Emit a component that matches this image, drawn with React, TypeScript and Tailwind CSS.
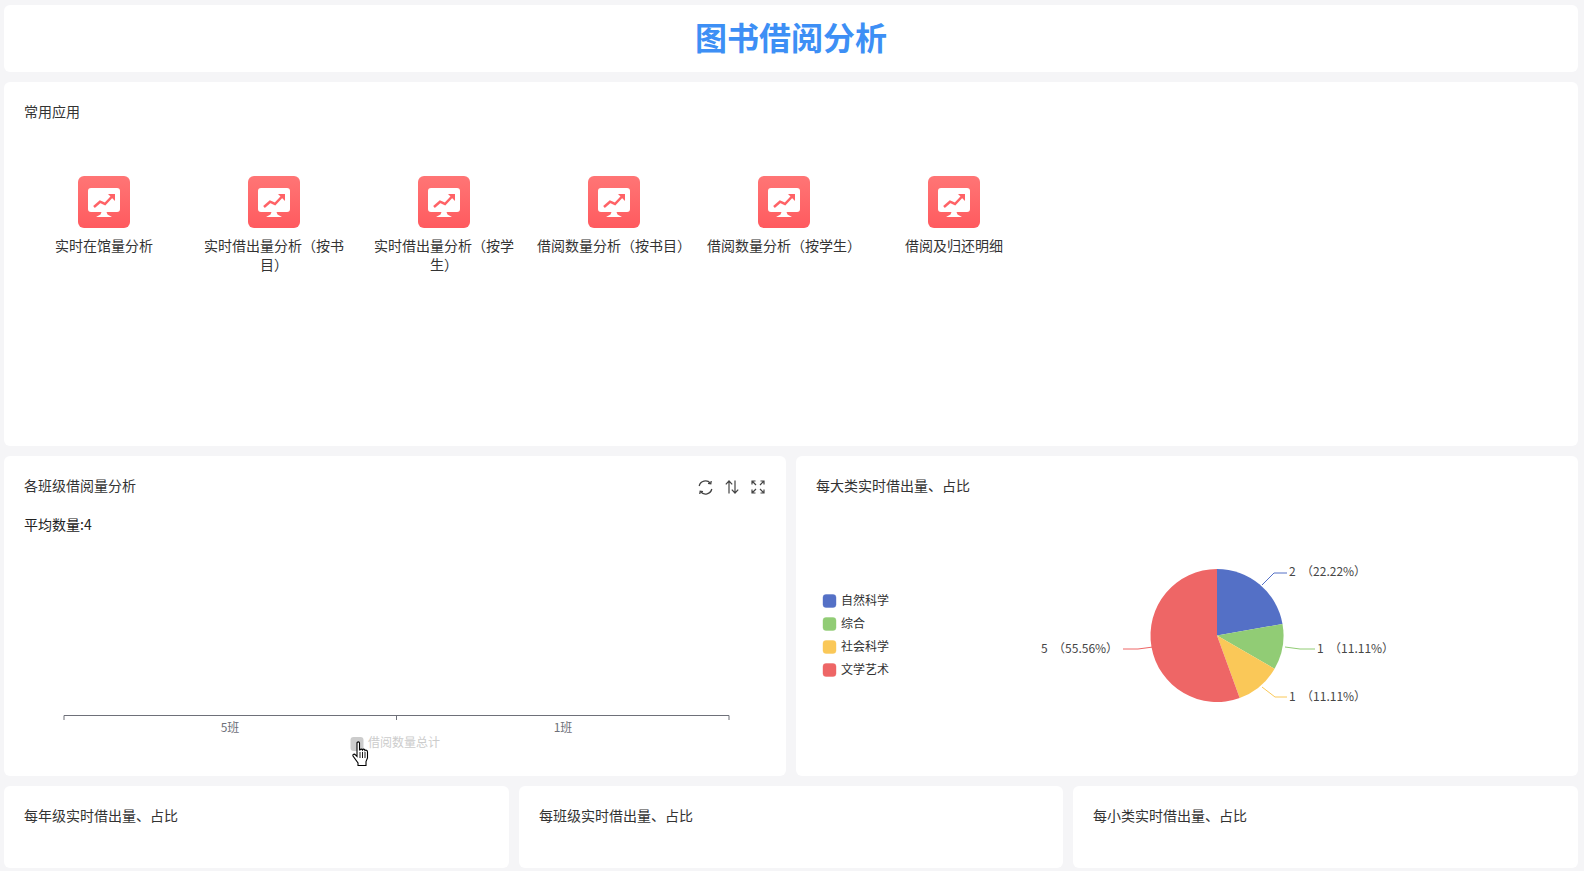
import { Fragment } from "react";

const apps = [
    "实时在馆量分析",
    "实时借出量分析（按书目）",
    "实时借出量分析（按学生）",
    "借阅数量分析（按书目）",
    "借阅数量分析（按学生）",
    "借阅及归还明细",
];

const slices = [
    { name: "自然科学", color: "#5470c6", d: "M1217 635.5 L1217 569 A66.5 66.5 0 0 1 1282.5 624 Z" },
    { name: "综合", color: "#91cc75", d: "M1217 635.5 L1282.5 624 A66.5 66.5 0 0 1 1274.6 668.8 Z" },
    { name: "社会科学", color: "#fac858", d: "M1217 635.5 L1274.6 668.8 A66.5 66.5 0 0 1 1239.7 698 Z" },
    { name: "文学艺术", color: "#ee6666", d: "M1217 635.5 L1239.7 698 A66.5 66.5 0 1 1 1217 569 Z" },
];

const pieLabels = [
    { text: "2", pct: "（22.22%）", x: 1289, y: 572, color: "#5470c6", line: "M1262 585 L1274 573 L1287 573" },
    { text: "1", pct: "（11.11%）", x: 1317, y: 649, color: "#91cc75", line: "M1285 647 L1300 649 L1315 649" },
    { text: "1", pct: "（11.11%）", x: 1289, y: 697, color: "#fac858", line: "M1262 687 L1275 697 L1287 697" },
    { text: "5", pct: "（55.56%）", x: 1041, y: 649, color: "#ee6666", line: "M1153 647 L1138 649 L1123 649" },
];

function AppIcon() {
    return (
        <div className="flex h-[52px] w-[52px] items-center justify-center rounded-md bg-gradient-to-b from-[#ff7575] to-[#ff5a5f]">
            <svg width="32" height="29" viewBox="0 0 32 29">
                <rect x="0" y="0" width="32" height="24" rx="3" fill="#fff" />
                <path d="M13.5 24 L18.5 24 L19.5 26.5 L24 29 L8 29 L12.5 26.5 Z" fill="#fff" />
                <path d="M6 19 L12 13.7 L17 16 L24.5 8" fill="none" stroke="#ff6266" strokeWidth="2.5" />
                <path d="M20 6 L27 6 L27 13 Z" fill="#ff6266" />
            </svg>
        </div>
    );
}

function ChartTools() {
    return (
        <div className="mr-px flex items-center gap-3 pt-1 text-[#444]">
            <svg width="15" height="15" viewBox="0 0 15 15" fill="none" stroke="currentColor" strokeWidth="1.3">
                <path d="M1.2 6 A6.5 6.5 0 0 1 12.4 3.2" />
                <path d="M13.8 9 A6.5 6.5 0 0 1 2.6 11.8" />
                <path d="M13.2 1 L12.8 3.8 L10 3.4" />
                <path d="M1.8 14 L2.2 11.2 L5 11.6" />
            </svg>
            <svg width="14" height="14" viewBox="0 0 14 14" fill="none" stroke="currentColor" strokeWidth="1.2">
                <path d="M4 13.5 L4 1 M0.8 4.4 L4 1 L7.2 4.4" />
                <path d="M10 0.5 L10 13 M6.8 9.6 L10 13 L13.2 9.6" />
            </svg>
            <svg width="14" height="14" viewBox="0 0 14 14" fill="none" stroke="currentColor" strokeWidth="1.2">
                <path d="M5 5 L1 1 M1 4.5 L1 1 L4.5 1" />
                <path d="M9 5 L13 1 M9.5 1 L13 1 L13 4.5" />
                <path d="M5 9 L1 13 M1 9.5 L1 13 L4.5 13" />
                <path d="M9 9 L13 13 M13 9.5 L13 13 L9.5 13" />
            </svg>
        </div>
    );
}

function BarChart() {
    // viewBox is in page coordinates, it is simpler to read against the design
    return (
        <svg className="mt-1 block" width="742" height="238" viewBox="24 538 742 238" fontSize="12">
            <path d="M64 720 L64 715.5 L729 715.5 L729 720 M396.5 715.5 L396.5 720" fill="none" stroke="#6e7079" />
            <text x="230" y="732" textAnchor="middle" fill="#6e7079">5班</text>
            <text x="563" y="732" textAnchor="middle" fill="#6e7079">1班</text>
            <rect x="350.5" y="737" width="13" height="14" rx="3" fill="#ccc" />
            <text x="368" y="747" fill="#ccc">借阅数量总计</text>
        </svg>
    );
}

function HandCursor() {
    return (
        <svg className="absolute left-[352px] top-[741px]" width="20" height="26" viewBox="0 0 20 26">
            <path
                d="M5 2 C5 0.5 7.5 0.5 7.5 2 L7.5 9 L8 9 C8.5 7.8 10 7.8 10.5 9 C11 7.8 12.5 7.8 13 9.5 C13.5 8.8 15.5 9 15.5 11 L15.5 17 L14 20.5 L14 24.5 L6 24.5 L6 22 L1 15 C0.5 13 2.5 12.5 3.5 14 L5 15.5 Z"
                fill="#fff"
                stroke="#000"
                strokeWidth="1.1"
            />
            <path d="M8 11 L8 17 M10.5 11 L10.5 17 M13 11 L13 17" stroke="#000" strokeWidth="0.9" />
        </svg>
    );
}

function PieChart() {
    return (
        <svg className="block" width="742" height="240" viewBox="816 516 742 240" fontSize="12">
            {slices.map((s, i) => (
                <Fragment key={s.name}>
                    <rect x="823" y={594.5 + i * 23} width="13" height="13" rx="3" fill={s.color} stroke={s.color} strokeOpacity="0.4" />
                    <text x="841" y={605 + i * 23} fill="#333">{s.name}</text>
                    <path d={s.d} fill={s.color} />
                </Fragment>
            ))}
            {pieLabels.map((l) => (
                <Fragment key={l.x + l.pct}>
                    <path d={l.line} fill="none" stroke={l.color} />
                    <text x={l.x} y={l.y + 4} fill="#464646" xmlSpace="preserve">{l.text}  {l.pct}</text>
                </Fragment>
            ))}
        </svg>
    );
}

export default function App() {
    return (
        <div className="h-[871px] overflow-hidden bg-[#f5f5f7] pt-[5px] pl-1 pr-1.5 font-['Noto_Sans_CJK_SC','Noto_Sans',sans-serif] text-sm text-[#333]">
            <div className="flex flex-col gap-2.5">
                <div className="flex h-[67px] items-center justify-center rounded-md bg-white pb-1">
                    <h1 className="text-[32px] font-bold text-[#3d8ff5]">图书借阅分析</h1>
                </div>

                <div className="h-[364px] rounded-md bg-white px-5 pt-[19px]">
                    <div className="leading-5">常用应用</div>
                    <div className="mt-[55px] -ml-[5px] flex">
                        {apps.map((name) => (
                            <div key={name} className="flex w-[170px] flex-col items-center px-[5px]">
                                <AppIcon />
                                <div className="mt-2 text-center leading-[19px]">{name}</div>
                            </div>
                        ))}
                    </div>
                </div>

                <div className="grid h-[320px] grid-cols-2 gap-2.5">
                    <div className="rounded-md bg-white px-5 pt-[19px]">
                        <div className="flex h-5 items-center justify-between">
                            <span>各班级借阅量分析</span>
                            <ChartTools />
                        </div>
                        <div className="mt-[19px] leading-5 text-[#222]">平均数量:4</div>
                        <BarChart />
                    </div>
                    <div className="rounded-md bg-white px-5 pt-[19px]">
                        <div className="flex h-5 items-center">每大类实时借出量、占比</div>
                        <div className="mt-[21px]">
                            <PieChart />
                        </div>
                    </div>
                </div>

                <div className="grid h-[82px] grid-cols-[505px_544px_505px] gap-2.5">
                    <div className="rounded-md bg-white px-5 pt-[19px] leading-5">每年级实时借出量、占比</div>
                    <div className="rounded-md bg-white px-5 pt-[19px] leading-5">每班级实时借出量、占比</div>
                    <div className="rounded-md bg-white px-5 pt-[19px] leading-5">每小类实时借出量、占比</div>
                </div>
            </div>
            <HandCursor />
        </div>
    );
}
